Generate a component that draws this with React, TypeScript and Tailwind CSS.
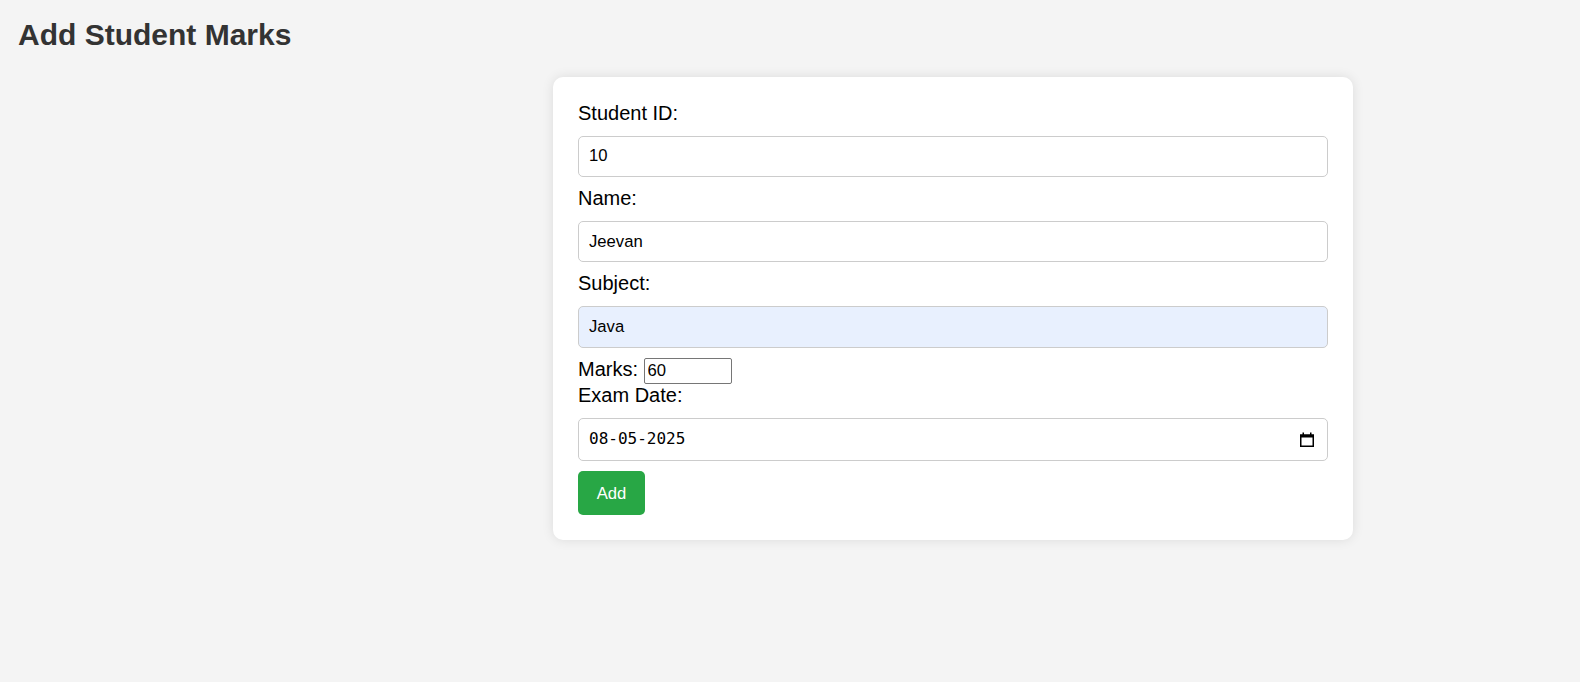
const fields = [
	{ label: "Student ID:", value: "10" },
	{ label: "Name:", value: "Jeevan" },
	{ label: "Subject:", value: "Java", filled: true },
];

const CalendarIcon = () => (
	<svg width="16" height="15" viewBox="0 0 16 15" fill="none">
		<rect x="1" y="2.5" width="14" height="3" fill="#000" />
		<rect x="1.75" y="3.25" width="12.5" height="11" stroke="#000" strokeWidth="1.5" />
		<rect x="3.5" y="0.5" width="1.5" height="2.5" fill="#000" />
		<rect x="11" y="0.5" width="1.5" height="2.5" fill="#000" />
	</svg>
);

const App: React.FC = () => {
	return (
		<div className="min-h-screen bg-[#f4f4f4] pt-[18px] font-['Liberation_Sans',Arial,sans-serif] text-black">
			<h1 className="ml-[18px] text-[30px] leading-[34.5px] font-bold text-[#333]">Add Student Marks</h1>

			<form
				className="mt-[24.5px] ml-[553px] w-[800px] bg-white rounded-[10px] p-[25px] flex flex-col shadow-[0_0_12px_rgba(0,0,0,0.1)]"
				onSubmit={(e) => e.preventDefault()}
			>
				{fields.map((f) => (
					<div key={f.label} className="flex flex-col">
						<label className="text-[20px] leading-[23.5px]">{f.label}</label>
						<input
							readOnly
							value={f.value}
							className={`my-[10px] h-[41.7px] w-full rounded-[5px] border border-[#ccc] px-[10px] text-[16.67px] outline-none ${
								f.filled ? "bg-[#e8f0fe]" : "bg-white"
							}`}
						/>
					</div>
				))}

				<div className="flex items-baseline h-[26.7px]">
					<label className="text-[20px] leading-[23.5px]">Marks:</label>
					<input
						readOnly
						value="60"
						className="ml-[5.5px] h-[26.5px] w-[88px] rounded-[2px] border border-[#767676] px-[3px] text-[16.67px] outline-none"
					/>
				</div>

				<label className="text-[20px] leading-[23.5px]">Exam Date:</label>
				<div className="mt-[10.5px] h-[42.3px] w-full rounded-[5px] border border-[#ccc] pl-[10px] pr-[12.5px] flex items-center justify-between">
					<span className="font-['DejaVu_Sans_Mono',monospace] text-[16px]">08-05-2025</span>
					<CalendarIcon />
				</div>

				<button
					type="submit"
					className="mt-[10.5px] self-start rounded-[5px] bg-[#28a745] px-[18.75px] py-[12.5px] text-[16.67px] leading-[19.3px] text-white"
				>
					Add
				</button>
			</form>
		</div>
	);
};

export default App;
